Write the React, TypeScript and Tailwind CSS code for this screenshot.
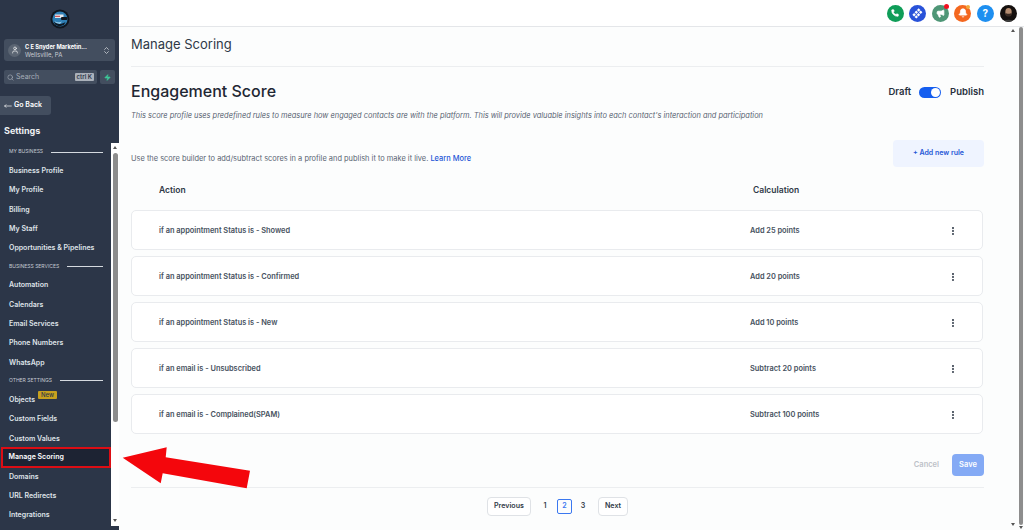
import { Bell, ChevronsUpDown, EllipsisVertical, Megaphone, MoveLeft, Phone, Search, User, Zap } from "lucide-react";

const businessItems = ["Business Profile", "My Profile", "Billing", "My Staff", "Opportunities & Pipelines"];
const serviceItems = ["Automation", "Calendars", "Email Services", "Phone Numbers", "WhatsApp"];
const rules = [
  { action: "if an appointment Status is - Showed", calc: "Add 25 points" },
  { action: "if an appointment Status is - Confirmed", calc: "Add 20 points" },
  { action: "if an appointment Status is - New", calc: "Add 10 points" },
  { action: "if an email is - Unsubscribed", calc: "Subtract 20 points" },
  { action: "if an email is - Complained(SPAM)", calc: "Subtract 100 points" },
];

function NavItem({ label }: { label: string }) {
  return <div className="h-[19.3px] pl-[9px] text-[7px] leading-[19.3px] font-semibold text-[#dfe3e8] whitespace-nowrap">{label}</div>;
}

function SectionLabel({ label }: { label: string }) {
  return (
    <div className="h-[18px] pl-[9px] pr-2 flex items-center gap-2">
      <span className="text-[5px] text-[#c5cbd3] whitespace-nowrap">{label}</span>
      <div className="flex-1 h-px bg-[#d5dae0]" />
    </div>
  );
}

function Logo() {
  return (
    <svg width="20" height="20" viewBox="0 0 20 20">
      <circle cx="10" cy="10" r="9.5" fill="#10161f" />
      <circle cx="10" cy="10" r="7.6" fill="#2f7fb5" />
      <path d="M3.5 11.5c2 3.5 8 4.5 12 1.5l-1.5 3-5 1.5-4-2z" fill="#0f1a26" />
      <path d="M4 12c3 1.5 6 1.5 8 .5l-2 2.5-4-1z" fill="#8fc7e8" />
      <rect x="5" y="5.5" width="8.5" height="3.5" fill="#e7e9ec" />
      <rect x="5" y="6.8" width="5" height="1" fill="#c2343a" />
      <rect x="11" y="8" width="6.5" height="3" rx="1" fill="#10161f" />
    </svg>
  );
}

function TopIcon({ className, children }: { className: string; children: React.ReactNode }) {
  return <div className={`relative w-[17px] h-[17px] rounded-full flex items-center justify-center text-white ${className}`}>{children}</div>;
}

function Sidebar() {
  return (
    <div className="w-[119px] h-full shrink-0 flex flex-col bg-[#2c3648] font-['Inter',sans-serif]">
      <div className="h-[143px] shrink-0 flex flex-col">
        <div className="flex justify-center pt-[9px]"><Logo /></div>
        <div className="mx-1 mt-[10px] h-[22px] rounded-[3px] bg-[#434e5f] flex items-center pl-[4px] pr-[4px]">
          <div className="w-[13px] h-[13px] rounded-full bg-[#5b6573] flex items-center justify-center"><User size={8} className="text-white" /></div>
          <div className="ml-[4px] flex-1 min-w-0">
            <div className="text-[5.7px] leading-[8px] font-bold text-white whitespace-nowrap">C E Snyder Marketin...</div>
            <div className="text-[6px] leading-[7px] text-[#c8cdd4]">Wellsville, PA</div>
          </div>
          <ChevronsUpDown size={9} className="text-[#d5d9de]" />
        </div>
        <div className="mx-1 mt-[9px] flex gap-[3px]">
          <div className="w-[93px] h-[14px] rounded-[2px] bg-[#434e5f] flex items-center px-[3px]">
            <Search size={7} className="text-[#aeb5bf]" />
            <span className="ml-[2px] flex-1 text-[7px] text-[#a5adb8]">Search</span>
            <span className="bg-[#aab1ba] rounded-[1px] px-[2px] text-[6px] leading-[8px] font-semibold text-[#2c3648]">ctrl K</span>
          </div>
          <div className="w-[15px] h-[14px] rounded-[2px] bg-[#434e5f] flex items-center justify-center">
            <Zap size={7} className="text-[#3ec99a]" fill="#3ec99a" />
          </div>
        </div>
        <div className="mt-[12px] w-[51px] h-[19px] rounded-r-[3px] bg-[#434e5f] flex items-center pl-[4px] gap-[2px]">
          <MoveLeft size={8} className="text-white" />
          <span className="text-[7px] font-semibold text-white whitespace-nowrap">Go Back</span>
        </div>
        <div className="mt-[9px] pl-[4px] text-[9px] leading-[14px] font-bold text-[#eef0f3]">Settings</div>
      </div>
      <div className="flex-1 flex min-h-0">
        <div className="w-[111px]">
          <SectionLabel label="MY BUSINESS" />
          {businessItems.map((i) => <NavItem key={i} label={i} />)}
          <SectionLabel label="BUSINESS SERVICES" />
          {serviceItems.map((i) => <NavItem key={i} label={i} />)}
          <SectionLabel label="OTHER SETTINGS" />
          <div className="h-[19.3px] pl-[9px] flex text-[7px] leading-[19.3px] font-semibold text-[#dfe3e8]">
            Objects
            <span className="ml-[3px] mt-[1px] h-[8px] px-[3px] bg-[#c7a01e] rounded-[1px] text-[6px] leading-[8px] font-medium text-[#2c3648]">New</span>
          </div>
          <NavItem label="Custom Fields" />
          <NavItem label="Custom Values" />
          <div className="-my-[1px] ml-[1px] h-[21px] border-[2.5px] border-[#dc0d14] bg-[#1d2333] pl-[5.5px] text-[7px] leading-[16px] font-semibold text-white">Manage Scoring</div>
          <NavItem label="Domains" />
          <NavItem label="URL Redirects" />
          <NavItem label="Integrations" />
        </div>
        <div className="w-[8px] mb-[4px] bg-white flex flex-col items-center">
          <div className="mt-[3px] w-0 h-0 border-x-[2px] border-x-transparent border-b-[3px] border-b-[#555]" />
          <div className="mt-[4px] w-[5px] h-[269px] rounded-[3px] bg-[#8d8d8d]" />
          <div className="mt-auto mb-[4px] w-0 h-0 border-x-[2px] border-x-transparent border-t-[3px] border-t-[#555]" />
        </div>
      </div>
    </div>
  );
}

function Main() {
  return (
    <div className="flex-1 min-w-0 h-full flex flex-col font-['Inter',sans-serif]">
      <div className="h-[27px] shrink-0 bg-white border-b border-[#e4e6e9] flex items-center justify-end gap-[5.6px] pr-[7.5px]">
        <TopIcon className="bg-[#0f9d58]"><Phone size={8} fill="currentColor" /></TopIcon>
        <TopIcon className="bg-[#2952d9]">
          <svg width="11" height="11" viewBox="0 0 10 10" fill="white">
            <rect x="5" y="0.6" width="2.2" height="2.2" transform="rotate(45 6 1.7)" />
            <rect x="2.8" y="2.8" width="2.2" height="2.2" transform="rotate(45 3.9 3.9)" />
            <rect x="6.8" y="2.8" width="2.2" height="2.2" transform="rotate(45 7.9 3.9)" />
            <rect x="0.8" y="5" width="2.2" height="2.2" transform="rotate(45 1.9 6.1)" />
            <rect x="4.8" y="5" width="2.2" height="2.2" transform="rotate(45 5.9 6.1)" />
            <rect x="2.8" y="7" width="2.2" height="2.2" transform="rotate(45 3.9 8.1)" />
          </svg>
        </TopIcon>
        <TopIcon className="bg-[#4e9676]">
          <Megaphone size={9} fill="currentColor" />
          <span className="absolute -top-px right-0 w-[5px] h-[5px] rounded-full bg-[#f01020]" />
        </TopIcon>
        <TopIcon className="bg-[#f4671f]">
          <Bell size={10} fill="currentColor" />
          <span className="absolute top-0 right-[1px] w-[4px] h-[4px] rounded-full bg-[#f2a93b]" />
        </TopIcon>
        <TopIcon className="bg-[#1e8ff0]"><span className="text-[10px] font-bold leading-none">?</span></TopIcon>
        <TopIcon className="bg-[#15100e] overflow-hidden">
          <svg width="17" height="17" viewBox="0 0 17 17">
            <ellipse cx="8.5" cy="7" rx="3.2" ry="4" fill="#b58c70" />
            <path d="M5.5 8c1 1 5 1 6 0v2c-1 2-5 2-6 0z" fill="#3a2a22" />
            <path d="M3 17c1-3 10-3 11 0z" fill="#3c3c3c" />
          </svg>
        </TopIcon>
      </div>
      <div className="flex-1 min-h-0 flex bg-[#fcfdfd]">
        <div className="flex-1 min-w-0 pl-[12px] pr-[24px] flex flex-col">
          <div className="h-[40px] shrink-0 border-b border-[#eceef0] pt-[8px]">
            <div className="text-[13px] leading-[18px] text-[#2f3947]">Manage Scoring</div>
          </div>
          <div className="mt-[13px] flex items-center justify-between">
            <div className="text-[16px] leading-[22px] font-medium text-[#1f2733]">Engagement Score</div>
            <div className="pt-[3px] flex items-center text-[9.5px] font-semibold text-[#27303d]">
              <span>Draft</span>
              <div className="ml-[8px] mr-[9px] w-[22px] h-[11px] rounded-full bg-[#155eef] flex items-center justify-end pr-[1px]">
                <div className="w-[9px] h-[9px] rounded-full bg-white" />
              </div>
              <span>Publish</span>
            </div>
          </div>
          <div className="mt-[8px] text-[7.43px] leading-[12px] italic text-[#5a6473] whitespace-nowrap">
            This score profile uses predefined rules to measure how engaged contacts are with the platform. This will provide valuable insights into each contact's interaction and participation
          </div>
          <div className="mt-[18px] flex items-center justify-between">
            <div className="text-[7.45px] text-[#5a6473] pt-[11px]">
              Use the score builder to add/subtract scores in a profile and publish it to make it live. <span className="text-[#2456d6] font-medium">Learn More</span>
            </div>
            <div className="w-[91px] h-[27px] rounded-[4px] bg-[#eff4ff] flex items-center justify-center text-[7px] font-semibold text-[#2456d6]">+ Add new rule</div>
          </div>
          <div className="mt-[16px] h-[14px] pl-[28px] flex items-center text-[8.5px] font-semibold text-[#2f3947]">
            <div className="w-[594px]">Action</div>
            <div>Calculation</div>
          </div>
          <div className="mt-[13px] flex flex-col gap-[6px] pr-[1px]">
            {rules.map((r) => (
              <div key={r.action} className="h-[40px] pt-[2px] rounded-[5px] border border-[#e9ebee] bg-white pl-[27px] flex items-center text-[7.4px] font-semibold text-[#475260]">
                <div className="w-[591px]">{r.action}</div>
                <div className="w-[198px]">{r.calc}</div>
                <EllipsisVertical size={10} className="text-[#2f3947]" strokeWidth={3} />
              </div>
            ))}
          </div>
          <div className="mt-[20px] flex justify-end items-center">
            <span className="mr-[13px] text-[7.5px] font-semibold text-[#bcc1c8]">Cancel</span>
            <div className="w-[32px] h-[22px] rounded-[4px] bg-[#84aaf5] flex items-center justify-center text-[7.5px] font-semibold text-white">Save</div>
          </div>
          <div className="mt-[11px] border-t border-[#eceef0] pt-[9px] pl-[356px] flex items-center text-[7.1px] font-semibold text-[#2f3947]">
            <div className="w-[44px] h-[19px] rounded-[4px] border border-[#dfe2e6] bg-white flex items-center justify-center">Previous</div>
            <div className="ml-[10px] w-[8px] text-center">1</div>
            <div className="ml-[8px] w-[15px] h-[15px] rounded-[2px] border border-[#3b78f0] text-[#3b78f0] flex items-center justify-center">2</div>
            <div className="ml-[7px] w-[8px] text-center">3</div>
            <div className="ml-[11px] w-[30px] h-[19px] rounded-[4px] border border-[#dfe2e6] bg-white flex items-center justify-center">Next</div>
          </div>
        </div>
        <div className="w-[9px] shrink-0 flex flex-col items-center">
          <div className="mt-[2px] w-0 h-0 border-x-[2px] border-x-transparent border-b-[3px] border-b-[#555]" />
          <div className="mt-auto mb-[4px] w-0 h-0 border-x-[2px] border-x-transparent border-t-[3px] border-t-[#555]" />
        </div>
        <div className="w-[7px] shrink-0 flex flex-col items-center">
          <div className="w-[4px] h-[498px] rounded-[2px] bg-[#8d8d8d]" />
          <div className="mt-[1px] w-0 h-0 border-x-[2px] border-x-transparent border-t-[3px] border-t-[#555]" />
        </div>
      </div>
    </div>
  );
}

export default function App() {
  return (
    <div className="relative w-[1024px] h-[530px] flex overflow-hidden bg-white">
      <Sidebar />
      <Main />
      {/* red annotation arrow drawn over the page */}
      <svg className="absolute left-[118px] top-[443px]" width="136" height="50" viewBox="118 443 136 50">
        <polygon points="122.7,457.7 166.7,447.3 165.7,457.3 250,470.7 246.7,488.3 162.7,473.3 160.7,483.3" fill="#f4060c" />
      </svg>
    </div>
  );
}
